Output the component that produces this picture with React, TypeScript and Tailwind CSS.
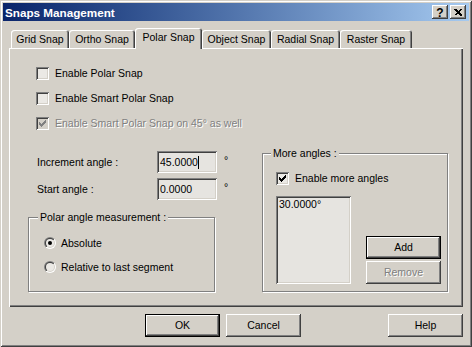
import React from 'react';

// classic 3D edges
const raised =
  'shadow-[inset_-1px_-1px_#404040,inset_1px_1px_#ffffff,inset_-2px_-2px_#808080,inset_2px_2px_#d4d0c8]';
const defaultBtn =
  'border border-black shadow-[inset_-1px_-1px_#404040,inset_1px_1px_#ffffff,inset_-2px_-2px_#808080]';
const sunken =
  'shadow-[inset_1px_1px_#808080,inset_-1px_-1px_#ffffff,inset_2px_2px_#404040,inset_-2px_-2px_#d4d0c8]';
const etched = 'border border-[#808080] shadow-[inset_1px_1px_#ffffff,1px_1px_#ffffff]';
const tabEdge = 'shadow-[inset_1px_1px_#ffffff,inset_-1px_0_#404040,inset_-2px_0_#808080]';
const disabledText = 'text-[#808080] [text-shadow:1px_1px_#ffffff]';

function CheckBox({ checked = false, disabled = false }: { checked?: boolean; disabled?: boolean }) {
  const tops = [2, 3, 4, 3, 2, 1, 0];
  return (
    <span
      className={`relative block w-[13px] h-[13px] shrink-0 ${sunken} ${
        disabled ? 'bg-[#d4d0c8]' : 'bg-[#ebe9e5]'
      }`}
    >
      {checked && (
        <svg className="absolute left-[3px] top-[3px]" width="7" height="7" shapeRendering="crispEdges">
          {tops.map((t, i) => (
            <rect key={i} x={i} y={t} width="1" height="3" fill={disabled ? '#808080' : '#000000'} />
          ))}
        </svg>
      )}
    </span>
  );
}

function Radio({ checked = false }: { checked?: boolean }) {
  return (
    <svg width="12" height="12" viewBox="0 0 12 12" className="shrink-0">
      <defs>
        <linearGradient id="radioOuter" x1="0" y1="0" x2="1" y2="1">
          <stop offset="0.5" stopColor="#808080" />
          <stop offset="0.5" stopColor="#ffffff" />
        </linearGradient>
        <linearGradient id="radioInner" x1="0" y1="0" x2="1" y2="1">
          <stop offset="0.5" stopColor="#404040" />
          <stop offset="0.5" stopColor="#d4d0c8" />
        </linearGradient>
      </defs>
      <circle cx="6" cy="6" r="6" fill="url(#radioOuter)" />
      <circle cx="6" cy="6" r="5" fill="url(#radioInner)" />
      <circle cx="6" cy="6" r="4" fill="#ebe9e5" />
      {checked && <circle cx="6" cy="6" r="2" fill="#000000" />}
    </svg>
  );
}

function TitleButton({ children }: { children: React.ReactNode }) {
  return (
    <div className={`w-[16px] h-[14px] bg-[#d4d0c8] flex items-center justify-center ${raised}`}>
      {children}
    </div>
  );
}

const tabs = [
  { label: 'Grid Snap', w: 'w-[58px]' },
  { label: 'Ortho Snap', w: 'w-[66px]' },
  { label: 'Polar Snap', w: 'w-[67px]', active: true },
  { label: 'Object Snap', w: 'w-[69px]' },
  { label: 'Radial Snap', w: 'w-[69px]' },
  { label: 'Raster Snap', w: 'w-[72px]' },
];

export default function App() {
  return (
    <div className="w-[472px] h-[347px] bg-[#d4d0c8] p-[3px] flex flex-col font-['Liberation_Sans',Arial,sans-serif] text-[10.5px] leading-[13px] text-black select-none shadow-[inset_1px_1px_#d4d0c8,inset_-1px_-1px_#404040,inset_2px_2px_#ffffff,inset_-2px_-2px_#808080]">
      {/* Title bar */}
      <div className="h-[18px] shrink-0 flex items-center pl-[2px] pr-[3px] bg-linear-to-r from-[#0a246a] to-[#a6caf0]">
        <span className="text-white font-bold text-[11.7px]">Snaps Management</span>
        <div className="ml-auto flex gap-[2px]">
          <TitleButton>
            <span className="font-bold text-[12px] leading-[12px] mt-[1px]">?</span>
          </TitleButton>
          <TitleButton>
            <svg width="8" height="7" viewBox="0 0 8 7" shapeRendering="crispEdges">
              <path d="M0.5 0 L7 6.5 M1.5 0 L8 6.5 M7 0 L0.5 6.5 M8 0 L1.5 6.5" stroke="#000" strokeWidth="1" />
            </svg>
          </TitleButton>
        </div>
      </div>

      <div className="flex-1 flex flex-col px-[6px] pt-[7px]">
        {/* Tabs */}
        <div className="h-[20px] flex items-end pl-[2px]">
          {tabs.map((t) =>
            t.active ? (
              <div
                key={t.label}
                className={`relative z-10 h-[21px] -mb-px ${t.w} flex items-center justify-center pb-[3px] bg-[#d4d0c8] rounded-t-[3px] ${tabEdge}`}
              >
                {t.label}
              </div>
            ) : (
              <div
                key={t.label}
                className={`h-[18px] ${t.w} flex items-center justify-center pt-[1px] rounded-t-[3px] ${tabEdge}`}
              >
                {t.label}
              </div>
            )
          )}
        </div>

        {/* Tab panel */}
        <div className="h-[259px] flex flex-col pt-[19px] shadow-[inset_1px_1px_#ffffff,inset_-1px_-1px_#404040,inset_-2px_-2px_#808080]">
          <div className="ml-[27px] flex flex-col gap-[12px]">
            <label className="flex items-center gap-[6px] h-[13px]">
              <CheckBox />
              Enable Polar Snap
            </label>
            <label className="flex items-center gap-[6px] h-[13px]">
              <CheckBox />
              Enable Smart Polar Snap
            </label>
            <label className={`flex items-center gap-[6px] h-[13px] ${disabledText}`}>
              <CheckBox checked disabled />
              Enable Smart Polar Snap on 45° as well
            </label>
          </div>

          <div className="flex items-start mt-[21px]">
            {/* left column */}
            <div className="ml-[19px] w-[206px] flex flex-col">
              <div className="flex items-center h-[22px]">
                <span className="w-[129px] pl-[9px]">Increment angle :</span>
                <div className={`w-[60px] h-[22px] flex items-center pl-[3px] bg-[#e6e4e0] ${sunken}`}>
                  45.0000
                  <span className="w-px h-[13px] bg-black" />
                </div>
                <span className="ml-[7px] self-start mt-[3px]">°</span>
              </div>
              <div className="flex items-center h-[22px] mt-[5px]">
                <span className="w-[129px] pl-[9px]">Start angle :</span>
                <div className={`w-[60px] h-[22px] flex items-center pl-[3px] bg-[#e6e4e0] ${sunken}`}>
                  0.0000
                </div>
                <span className="ml-[7px] self-start mt-[3px]">°</span>
              </div>

              <div className={`relative mt-[17px] w-[187px] h-[75px] pl-[15px] pt-[19px] flex flex-col gap-[12px] ${etched}`}>
                <span className="absolute left-[9px] top-[-7px] px-[2px] bg-[#d4d0c8]">
                  Polar angle measurement :
                </span>
                <label className="flex items-center gap-[5px] h-[12px]">
                  <Radio checked />
                  Absolute
                </label>
                <label className="flex items-center gap-[5px] h-[12px]">
                  <Radio />
                  Relative to last segment
                </label>
              </div>
            </div>

            {/* right column */}
            <div className={`relative ml-[28px] mt-[2px] w-[186px] h-[139px] pl-[13px] pt-[18px] flex flex-col ${etched}`}>
              <span className="absolute left-[8px] top-[-7px] px-[2px] bg-[#d4d0c8]">More angles :</span>
              <label className="flex items-center gap-[6px] h-[13px]">
                <CheckBox checked />
                Enable more angles
              </label>
              <div className="flex items-end mt-[11px]">
                <div className={`w-[75px] h-[88px] pl-[3px] pt-[2px] bg-[#e6e4e0] ${sunken}`}>30.0000°</div>
                <div className="ml-[15px] flex flex-col gap-[2px]">
                  <button className={`w-[75px] h-[23px] bg-[#d4d0c8] ${defaultBtn}`}>Add</button>
                  <button className={`w-[75px] h-[23px] bg-[#d4d0c8] ${raised} ${disabledText}`}>Remove</button>
                </div>
              </div>
            </div>
          </div>
        </div>

        {/* Dialog buttons */}
        <div className="flex mt-[7px]">
          <button className={`ml-[136px] w-[75px] h-[23px] bg-[#d4d0c8] ${defaultBtn}`}>OK</button>
          <button className={`ml-[6px] w-[75px] h-[23px] bg-[#d4d0c8] ${raised}`}>Cancel</button>
          <button className={`ml-auto w-[75px] h-[23px] bg-[#d4d0c8] ${raised}`}>Help</button>
        </div>
      </div>
    </div>
  );
}
